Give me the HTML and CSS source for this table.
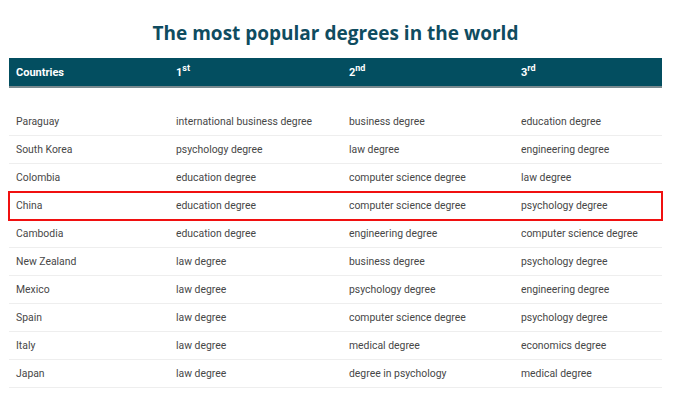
FILE: index.html
```html
<!DOCTYPE html>
<html>
<head>
<meta charset="utf-8">
<link rel="stylesheet" href="styles.css">
</head>
<body>
<div class="wrap">
  <h1 class="title">The most popular degrees in the world</h1>
  <table class="degrees">
    <colgroup>
      <col class="c1"><col class="c2"><col class="c3"><col class="c4">
    </colgroup>
    <thead>
      <tr>
        <th>Countries</th>
        <th>1<sup>st</sup></th>
        <th>2<sup>nd</sup></th>
        <th>3<sup>rd</sup></th>
      </tr>
    </thead>
    <tbody>
      <tr class="spacer"><td colspan="4"></td></tr>
      <tr><td>Paraguay</td><td>international business degree</td><td>business degree</td><td>education degree</td></tr>
      <tr><td>South Korea</td><td>psychology degree</td><td>law degree</td><td>engineering degree</td></tr>
      <tr><td>Colombia</td><td>education degree</td><td>computer science degree</td><td>law degree</td></tr>
      <tr class="highlight"><td>China</td><td>education degree</td><td>computer science degree</td><td>psychology degree</td></tr>
      <tr><td>Cambodia</td><td>education degree</td><td>engineering degree</td><td>computer science degree</td></tr>
      <tr><td>New Zealand</td><td>law degree</td><td>business degree</td><td>psychology degree</td></tr>
      <tr><td>Mexico</td><td>law degree</td><td>psychology degree</td><td>engineering degree</td></tr>
      <tr><td>Spain</td><td>law degree</td><td>computer science degree</td><td>psychology degree</td></tr>
      <tr><td>Italy</td><td>law degree</td><td>medical degree</td><td>economics degree</td></tr>
      <tr><td>Japan</td><td>law degree</td><td>degree in psychology</td><td>medical degree</td></tr>
    </tbody>
  </table>
</div>
</body>
</html>
```
FILE: styles.css
```css
html, body {
  margin: 0;
  padding: 0;
  background: #fff;
}
.wrap {
  width: 653px;
  margin-left: 9px;
  padding-top: 21px;
}
.title {
  margin: 0 0 12px 0;
  height: 25px;
  line-height: 25px;
  text-align: center;
  font-family: "Open Sans", "Liberation Sans", sans-serif;
  font-weight: 700;
  font-size: 19px;
  color: #0f4c60;
}
.degrees {
  width: 653px;
  border-collapse: collapse;
  table-layout: fixed;
  font-family: Roboto, "Liberation Sans", sans-serif;
  font-size: 10.4px;
}
.c1 { width: 160px; }
.c2 { width: 173px; }
.c3 { width: 172px; }
.c4 { width: 148px; }
.degrees thead tr {
  background: #034e60;
  border-bottom: 2px solid #7a8a8f;
}
.degrees th {
  height: 27px;
  padding: 1px 7px 0 7px;
  text-align: left;
  color: #fff;
  font-weight: 700;
  font-size: 11px;
}
.degrees th sup {
  font-size: 9px;
  vertical-align: 5px;
  line-height: 0;
}
.degrees td {
  height: 27px;
  padding: 0 7px;
  color: #474747;
  border-bottom: 1px solid #eeeeee;
  white-space: nowrap;
}
.degrees .spacer td {
  height: 20px;
  border-bottom: none;
}
.degrees .highlight {
  outline: 2px solid #f01010;
  outline-offset: -1px;
}
```
